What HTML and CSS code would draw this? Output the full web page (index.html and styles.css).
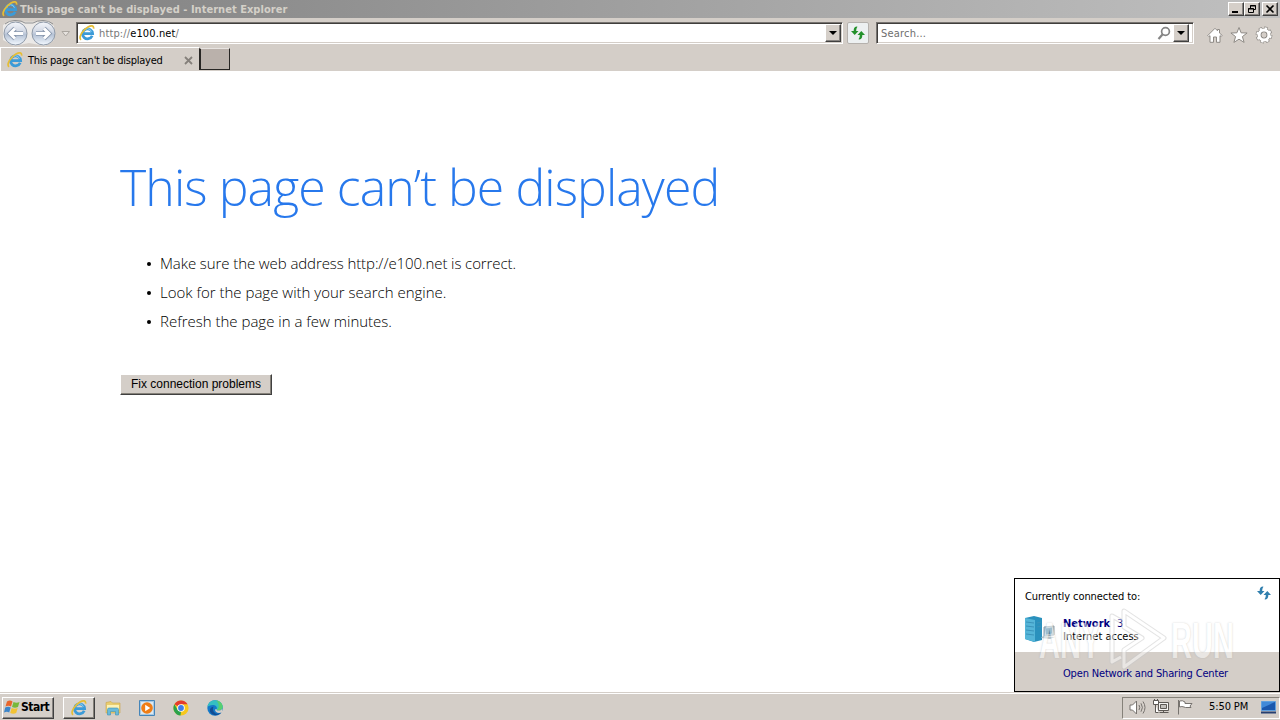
FILE: index.html
```html
<!DOCTYPE html>
<html lang="en">
<head>
    <meta charset="UTF-8">
    <title>This page can't be displayed</title>
    <link rel="stylesheet" href="styles.css">
</head>
<body>
    <svg width="0" height="0" class="defs">
        <symbol id="ie" viewBox="0 0 16 16">
            <path d="M13.2 10.800A5 5 0 1 1 13.600 8.600H4.500" fill="none" stroke="#3c9bd8" stroke-width="2.800"/>
            <path d="M4.600 6.900a4 4 0 0 1 7.800-.2" fill="none" stroke="#8bd0f3" stroke-width="1"/>
            <path d="M2 14.800C-.8 12.500 3.500 5 9 2c3.500-1.900 6-1.500 5.600 1.600" fill="none" stroke="#e6bd35" stroke-width="1.700"/>
        </symbol>
        <symbol id="refresh" viewBox="0 0 16 16">
            <path d="M6.500 1.500C4.200 1.800 3.700 3.500 3.700 6H1L4.700 10 8.500 6H6.200C6.200 4.500 6.500 3 7.500 1.700z"/>
            <path d="M9.500 14.500c2.300-.3 2.800-2 2.800-4.500h2.700L11.300 6 7.500 10h2.300c0 1.500-.3 3-1.300 4.300z"/>
        </symbol>
    </svg>

    <div class="title-bar">
        <svg class="ie-icon"><use href="#ie"/></svg>
        <span class="title-text">This page can't be displayed - Internet Explorer</span>
        <div class="window-buttons">
            <div class="win-btn"><svg width="12" height="10"><path d="M2 8h6" stroke="#000" stroke-width="2"/></svg></div>
            <div class="win-btn"><svg width="12" height="10" fill="none" stroke="#000"><path d="M4.500 4V1.500h5v4H8M4 2h6M2.500 4.500h5v4h-5zM2 5h6"/></svg></div>
            <div class="win-btn close"><svg width="12" height="10"><path d="M2.500 1.500l7 7M9.500 1.500l-7 7" stroke="#000" stroke-width="1.600"/></svg></div>
        </div>
    </div>

    <div class="toolbar">
        <svg class="nav" width="74" height="29" viewBox="0 0 74 29">
            <defs>
                <linearGradient id="glass" x1="0" y1="0" x2="0" y2="1">
                    <stop offset="0" stop-color="#f5f7fb"/>
                    <stop offset=".4" stop-color="#d3d9e5"/>
                    <stop offset=".55" stop-color="#b5c2d5"/>
                    <stop offset="1" stop-color="#f3f9ff"/>
                </linearGradient>
            </defs>
            <path d="M10 2.500Q29 5 48 2.500L54 8V22L45 28 29 25 14 28 3 22V7z" fill="#ebe9e7"/>
            <path d="M5 6Q9 2.500 15 2.500q7 0 10 2.500h8q4-2.500 10-2.500 6 0 10 3.500" fill="none" stroke="#8f9091"/>
            <circle cx="15.500" cy="15.500" r="11.500" fill="url(#glass)" stroke="#8f9aa9"/>
            <circle cx="43.500" cy="15.500" r="11.500" fill="url(#glass)" stroke="#8f9aa9"/>
            <g fill="none" stroke="#8796ac" stroke-width="4.600"><path d="M9.500 15.500H23M15 10.500l-5 5 5 5M49.500 15.500H36M44 10.500l5 5-5 5"/></g>
            <g fill="none" stroke="#fff" stroke-width="3"><path d="M9.500 15.500H23M15 10.500l-5 5 5 5M49.500 15.500H36M44 10.500l5 5-5 5"/></g>
            <path d="M62 13.500h7.500L65.700 18z" fill="#e6e2de" stroke="#aaa59f"/>
        </svg>
        <div class="field address">
            <svg class="ie-icon"><use href="#ie"/></svg>
            <span class="url">http://<b>e100.net</b>/</span>
            <div class="drop"><svg width="8" height="4"><path d="M0 0h8L4 4z"/></svg></div>
        </div>
        <div class="refresh-btn"><svg width="16" height="16" fill="#24912b"><use href="#refresh"/></svg></div>
        <div class="field search">
            <span class="placeholder">Search...</span>
            <svg class="lens" width="14" height="14" fill="none" stroke="#858585"><circle cx="8.500" cy="5.500" r="3.900" stroke-width="1.700"/><path d="M5.700 8.300L1.500 13" stroke-width="2.200"/></svg>
            <div class="drop"><svg width="8" height="4"><path d="M0 0h8L4 4z"/></svg></div>
        </div>
        <div class="tools">
            <svg width="16" height="16" fill="#fff" stroke="#8d8984"><path d="M.8 8.500L8 1.300l2.500 2.500V2.500h2V6L15.200 8.500l-1 1-1.200-.8v6.600H9.500V10h-3v5.300H3V8.700l-1.200.8z"/></svg>
            <svg width="18" height="16" fill="#fff" stroke="#8d8984"><path d="M9 .5l2.100 5.300 6 .2-4.700 3.600 1.700 5.800L9 12.200l-5.100 3.200 1.700-5.800L.9 6l6-.2z"/></svg>
            <svg width="18" height="18" viewBox="0 0 18 18">
                <circle cx="9" cy="9" r="6.700" fill="none" stroke="#8d8984" stroke-width="3.400" stroke-dasharray="3.300 1.960"/>
                <circle cx="9" cy="9" r="4.700" fill="none" stroke="#8d8984" stroke-width="4.600"/>
                <circle cx="9" cy="9" r="6.600" fill="none" stroke="#fff" stroke-width="2.200" stroke-dasharray="2.300 2.884" stroke-dashoffset="-.5"/>
                <circle cx="9" cy="9" r="4.900" fill="none" stroke="#fff" stroke-width="3"/>
                <circle cx="9" cy="9" r="2.400" fill="#d4cec8"/>
            </svg>
        </div>
    </div>

    <div class="tabs">
        <div class="tab">
            <svg class="ie-icon"><use href="#ie"/></svg>
            <span class="tab-text">This page can't be displayed</span>
            <svg class="tab-close" width="9" height="9"><path d="M1 1l7 7M8 1l-7 7" stroke="#85807b" stroke-width="1.800"/></svg>
        </div>
        <div class="new-tab"></div>
    </div>

    <div class="page">
        <h1>This page can’t be displayed</h1>
        <ul>
            <li class="address-tip">Make sure the web address http://e100.net is correct.</li>
            <li>Look for the page with your search engine.</li>
            <li>Refresh the page in a few minutes.</li>
        </ul>
        <button>Fix connection problems</button>
    </div>

    <div class="network">
        <div class="network-main">
            <div class="network-head">
                <span>Currently connected to:</span>
                <svg width="16" height="16" fill="#307fae"><use href="#refresh"/></svg>
            </div>
            <div class="network-row">
                <svg width="32" height="26" viewBox="0 0 32 26">
                    <path d="M0 2l9-2 8 2v22l-8 2-9-3z" fill="#2a91bd"/>
                    <path d="M0 2l10 2v22L0 23z" fill="#55b5d8"/>
                    <path d="M1 6l8 1M1 10l8 1M1 14l8 1M1 18l8 1M12 7l4-1M12 11l4-1" stroke="#3a93ba" fill="none"/>
                    <path d="M19 11l10-1v9l-10 1z" fill="#a5bdca" stroke="#8fa3ae"/>
                    <path d="M21 12.500l6-1v6l-6 1z" fill="#3c7a9d"/>
                    <path d="M18 20l12 1-5 2-9-1z" fill="#b5c2c8"/>
                </svg>
                <div class="network-info">
                    <div class="network-name">Network&nbsp; <span>3</span></div>
                    <div class="network-access">Internet access</div>
                </div>
            </div>
        </div>
        <div class="network-foot"><span>Open Network and Sharing Center</span></div>
        <div class="watermark">
            <span class="mark-any">ANY</span>
            <svg width="58" height="64" viewBox="0 0 58 64" fill="none" stroke-linejoin="round">
                <path d="M15 4l40 27-40 29V43l18-12-18-11zM12 14L3 9v46l9-5" stroke="#c8c8c8" stroke-width="5"/>
                <path d="M15 4l40 27-40 29V43l18-12-18-11zM12 14L3 9v46l9-5" stroke="#fff" stroke-width="3"/>
            </svg>
            <span class="mark-run">RUN</span>
        </div>
    </div>

    <div class="taskbar">
        <div class="start">
            <svg width="17" height="16" viewBox="0 0 17 16">
                <path d="M3 2.500q3-2 5.500 0L7 7.500Q4.500 6 1.500 7.500z" fill="#e9652b"/>
                <path d="M9.500 3q3 1.500 6 0L14 8q-3 1.500-6 0z" fill="#78b83b"/>
                <path d="M1.200 8.500q3-1.500 5.500 0l-1.500 5Q3 12 0 13.500z" fill="#3c85ca"/>
                <path d="M7.700 9q3 1.500 6 0l-1.500 5q-3 1.500-6 0z" fill="#f2c233"/>
            </svg>
            <span>Start</span>
        </div>
        <div class="task-active"><svg class="ie-icon"><use href="#ie"/></svg></div>
        <div class="launch">
            <svg width="16" height="16">
                <path d="M1 2.500l5-1 1.500 1.500H15v10H1z" fill="#e9cd70" stroke="#c9a54a" stroke-width=".6"/>
                <path d="M2 5h12v5H2z" fill="#fcf2b6"/>
                <path d="M2.500 15V9.500q0-1.500 1.500-1.500h8q1.500 0 1.500 1.500V15h-3v-3.500h-5V15z" fill="#69bad9" stroke="#3c92b7" stroke-width=".6"/>
            </svg>
            <svg width="16" height="16">
                <path d="M.5.500h15v15H.5z" fill="#a7c9e4" stroke="#4585b9"/>
                <path d="M2 2h12v12H2z" fill="#dbe9f2"/>
                <circle cx="8" cy="8" r="5.800" fill="#ef7d16"/>
                <path d="M6.200 4.700l5 3.300-5 3.300z" fill="#fff"/>
            </svg>
            <svg width="16" height="16" viewBox="0 0 16 16">
                <circle cx="8" cy="8" r="7.600" fill="#f7c81e"/>
                <path d="M8 8L1.400 4.200A7.600 7.600 0 0 1 14.600 4.300H8z" fill="#e33b2e"/>
                <path d="M1.400 4.200L5 10.500 8 11.500 7.500 15.600A7.600 7.600 0 0 1 1.400 4.200z" fill="#2ba24c"/>
                <circle cx="8" cy="8" r="3.800" fill="#fff"/>
                <circle cx="8" cy="8" r="2.900" fill="#3f7de8"/>
            </svg>
            <svg width="16" height="16" viewBox="0 0 16 16">
                <circle cx="8" cy="8" r="7.700" fill="#1479c9"/>
                <path d="M.4 7C1 2.800 4.200.3 8 .3c4.500 0 7.700 3.200 7.700 6.500 0 2.500-2 3.800-4 3.800-1.700 0-2.600-.8-2-1.700C10.500 7.500 9 5 6 5 3 5 1.200 6 .4 7z" fill="#35bfc2"/>
                <path d="M9 .4c4 .3 6.700 3.300 6.700 6.400 0 2.500-2 3.800-4 3.800l-1.900-1C12.500 8 12.500 3 9 .4z" fill="#58cf70"/>
                <path d="M6.500 6.800c-1.500 3 .5 7 4.500 7 2 0 3.200-.7 3.800-1.700C13 16 5 16.500 3 11.500 2.400 9 4 7 6.500 6.800z" fill="#114d95"/>
                <path d="M9.700 8.900c-.6.900.3 1.700 2 1.700 1.200 0 2.500-.5 3.300-1.500v3c-3 2-7 .5-7-2.600z" fill="#d5cfc9"/>
            </svg>
        </div>
        <div class="tray">
            <svg width="17" height="15" fill="#fff" stroke="#77736f"><path d="M1 5h2.500L7.500 1v13L3.500 10H1z"/><path d="M10 5q1.500 2.500 0 5M12 3.300q2.800 4.200 0 8.400M14 1.500q4 6 0 12" fill="none"/></svg>
            <svg width="17" height="16" fill="#f5f4f2" stroke="#5d5955"><path d="M5.500 3.500h10v8h-10zM6.500 13.500h9M10.500 11.500v2"/><path d="M7.500 5.500h6v4h-6z" fill="#c3c0bc"/><path d="M.5 1.500h5v4h-5zM1.500 0v1M4.500 0v1M2.500 5.500v8h3" fill="#fff"/></svg>
            <svg width="17" height="16" fill="#fff" stroke="#77736f"><path d="M1.500 1v14.500"/><path d="M2.500 2q3-1 5.500 1v1.500h7l-2 2.500 1 1.500H8.500L7 8q-2-1-4.500 0z"/></svg>
            <span class="clock">5:50 PM</span>
            <svg class="desktop" width="17" height="14"><path d="M1.500 1.500h14v9h-14z" fill="#1a57ad" stroke="#60a0de"/><path d="M2 2h13L2 8z" fill="#4189d8"/><path d="M1 12.500h15" stroke="#263f70" stroke-width="2"/></svg>
        </div>
    </div>
</body>
</html>
```
FILE: styles.css
```css
* {
    box-sizing: border-box;
}

body {
    margin: 0;
    width: 1280px;
    height: 720px;
    overflow: hidden;
    position: relative;
    display: flex;
    flex-direction: column;
    background: #fff;
    color: #000;
    font: 11px/14px "DejaVu Sans Condensed", "DejaVu Sans", sans-serif;
    white-space: nowrap;
}

svg {
    display: block;
    flex: none;
}

.defs {
    position: absolute;
}

.ie-icon {
    width: 16px;
    height: 16px;
}

.title-bar {
    height: 18px;
    flex: none;
    display: flex;
    align-items: center;
    padding: 0 2px;
    background: linear-gradient(to right, #808080, #c0c0c0);
    color: #d4d0c8;
}

.title-text {
    margin-left: 2px;
    padding-top: 1px;
    font-weight: bold;
    letter-spacing: 0.03px;
}

.window-buttons {
    display: flex;
    margin-left: auto;
}

.win-btn,
.drop,
.start {
    background: #d5cfc9;
    border: 1px solid;
    border-color: #fff #404040 #404040 #fff;
    box-shadow: inset -1px -1px #878380;
}

.win-btn {
    width: 16px;
    height: 14px;
    padding: 1px;
}

.close {
    margin-left: 2px;
}

.toolbar {
    height: 29px;
    flex: none;
    display: flex;
    align-items: flex-start;
    background: #d4cec8;
}

.nav {
    margin-right: 2px;
}

.field {
    display: flex;
    align-items: center;
    height: 22px;
    margin-top: 4px;
    background: #fff;
    border: 1px solid;
    border-color: #777370 #fff #fff #777370;
    box-shadow: inset 1px 1px #403e3c, inset -1px -1px #d4cec8;
}

.address {
    width: 767px;
    padding-left: 2px;
}

.url {
    margin-left: 4px;
    padding-top: 2px;
    color: #777;
    letter-spacing: 0.12px;
}

.url b {
    color: #000;
    font-weight: normal;
}

.drop {
    width: 16px;
    height: 18px;
    display: flex;
    align-items: center;
    justify-content: center;
    margin-left: auto;
    margin-right: 1px;
}

.refresh-btn {
    width: 22px;
    height: 22px;
    margin: 4px 7px 0 4px;
    padding: 2px;
    background: #edf0f1;
    border: 1px solid #b5b1ad;
    border-radius: 2px;
}

.search {
    width: 318px;
    padding: 0 3px 0 4px;
}

.placeholder {
    padding-top: 2px;
    color: #6e6e6e;
    letter-spacing: 0.2px;
}

.lens {
    margin-left: auto;
}

.search .drop {
    margin-left: 2px;
}

.tools {
    display: flex;
    align-items: center;
    gap: 7px;
    margin: 8px 0 0 13px;
}

.tabs {
    height: 24px;
    flex: none;
    display: flex;
    background: #d4cec8;
}

.tab {
    width: 199px;
    height: 24px;
    display: flex;
    align-items: center;
    padding: 1px 6px 0;
    border-top: 1px solid #fff;
    border-left: 1px solid #fff;
}

.tab-text {
    margin-left: 5px;
    padding-top: 1px;
    letter-spacing: -0.26px;
}

.tab-close {
    margin-left: auto;
}

.new-tab {
    width: 31px;
    height: 22px;
    margin-top: 1px;
    background: #bab1ab;
    border: 1px solid #282624;
    border-left-width: 2px;
    border-top-color: #e8e4e1;
}

.page {
    flex: 1;
    padding: 82px 120px 0;
}

h1 {
    margin: 0;
    color: #2778ec;
    font: 300 50px/68px "Open Sans", sans-serif;
    letter-spacing: -0.92px;
}

ul {
    margin: 28px 0 0;
    padding: 0 0 0 40px;
    list-style: none;
    font: 300 15px/29px "Open Sans", sans-serif;
}

li {
    position: relative;
}

li::before {
    content: "";
    position: absolute;
    left: -13px;
    top: 13px;
    width: 4px;
    height: 4px;
    border-radius: 2px;
    background: #000;
}

.address-tip {
    letter-spacing: -0.09px;
}

button {
    display: block;
    width: 152px;
    height: 21px;
    margin-top: 38px;
    padding: 0 0 1px;
    background: #d4cec8;
    border: 1px solid;
    border-color: #fff #404040 #404040 #fff;
    box-shadow: inset -1px -1px #858179;
    color: #000;
    font: 12px/16px "Liberation Sans", Arial, sans-serif;
}

.network {
    position: absolute;
    left: 1014px;
    top: 578px;
    width: 266px;
    height: 114px;
    background: #d4cec8;
    border: 1px solid #000;
    letter-spacing: -0.17px;
}

.network-main {
    height: 73px;
    background: #fff;
    padding: 6px 7px 0 10px;
}

.network-head {
    display: flex;
    justify-content: space-between;
}

.network-head span {
    margin-top: 5px;
    letter-spacing: -0.08px;
}

.network-row {
    display: flex;
    align-items: center;
    margin-top: 10px;
    gap: 6px;
}

.network-info {
    padding-top: 3px;
    line-height: 13px;
}

.network-name {
    color: #000080;
    font-weight: bold;
    letter-spacing: 0;
}

.network-name span {
    font-weight: normal;
}

.network-access {
    letter-spacing: 0;
}

.network-foot {
    padding: 15px 0 0 48px;
    color: #000080;
}

.watermark {
    position: absolute;
    left: 24px;
    top: 28px;
    width: 196px;
    height: 64px;
    opacity: .5;
    display: flex;
    align-items: center;
    color: #fff;
    font: bold 50px/58px "Liberation Sans", Arial, sans-serif;
    text-shadow: 0 0 2px #999;
    letter-spacing: 0;
}

.watermark svg {
    margin: 0 4px 0 8px;
}

.mark-any,
.mark-run {
    width: 62px;
    padding-top: 4px;
    transform: scaleX(.58);
    transform-origin: left;
}

.taskbar {
    height: 28px;
    flex: none;
    display: flex;
    align-items: center;
    padding: 2px 0 0 2px;
    background: #d4cec8;
    border-top: 1px solid #d4cec8;
    box-shadow: inset 0 1px #fff;
}

.start {
    width: 52px;
    height: 22px;
    display: flex;
    align-items: center;
    padding: 0 0 2px 1px;
    font-size: 12px;
    font-weight: bold;
    letter-spacing: -0.5px;
}

.task-active {
    width: 32px;
    height: 22px;
    margin-left: 9px;
    padding: 2px 7px;
    background: #d8d3ce;
    border: 1px solid;
    border-color: #fff #404040 #404040 #fff;
    box-shadow: inset -1px -1px #858179;
}

.launch {
    display: flex;
    gap: 18px;
    margin-left: 10px;
}

.tray {
    width: 158px;
    height: 22px;
    display: flex;
    align-items: center;
    gap: 7px;
    margin-left: auto;
    padding: 0 0 1px 6px;
    border: 1px solid;
    border-color: #858179 #fff #fff #858179;
}

.clock {
    margin-left: 8px;
    letter-spacing: -0.1px;
}

.desktop {
    margin-left: auto;
    margin-right: 2px;
}
```
